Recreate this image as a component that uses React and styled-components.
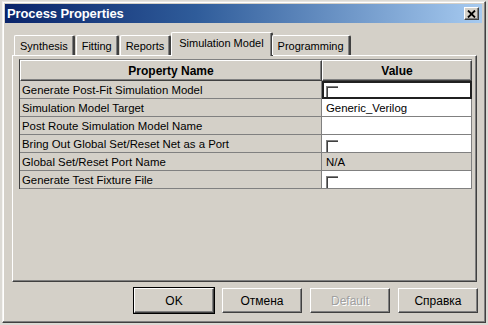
import React from 'react';
import styled, { createGlobalStyle } from 'styled-components';

const GlobalStyle = createGlobalStyle`
  html, body {
    margin: 0;
    padding: 0;
    background: #d4d0c8;
  }
  body {
    font-family: 'Liberation Sans', Arial, sans-serif;
  }
`;

const rows = [
  { name: 'Generate Post-Fit Simulation Model', kind: 'check', focused: true },
  { name: 'Simulation Model Target', kind: 'text', value: 'Generic_Verilog' },
  { name: 'Post Route Simulation Model Name', kind: 'text', value: '' },
  { name: 'Bring Out Global Set/Reset Net as a Port', kind: 'check' },
  { name: 'Global Set/Reset Port Name', kind: 'readonly', value: 'N/A' },
  { name: 'Generate Test Fixture File', kind: 'check' },
];

const tabs = ['Synthesis', 'Fitting', 'Reports', 'Simulation Model', 'Programming'];

const ProcessProperties = () => {
  return (
    <Screen>
      <GlobalStyle />
      <Window>
        <TitleBar>
          <Title>Process Properties</Title>
          <CloseButton>
            <svg width="9" height="8" viewBox="0 0 9 8">
              <path d="M1 0.5 L8 7.5 M8 0.5 L1 7.5" stroke="#000" strokeWidth="1.8" />
            </svg>
          </CloseButton>
        </TitleBar>

        <Body>
          <TabStrip>
            {tabs.map((t) => (
              <Tab key={t} $active={t === 'Simulation Model'}>{t}</Tab>
            ))}
          </TabStrip>

          <Panel>
            <Grid>
              <HeaderCell>Property Name</HeaderCell>
              <HeaderCell>Value</HeaderCell>
              {rows.map((r) => (
                <React.Fragment key={r.name}>
                  <NameCell>{r.name}</NameCell>
                  <ValueCell $readonly={r.kind === 'readonly'} $focused={r.focused}>
                    {r.kind === 'check' ? <CheckBox /> : r.value}
                  </ValueCell>
                </React.Fragment>
              ))}
            </Grid>
          </Panel>

          <ButtonRow>
            <Button $default>OK</Button>
            <Button>Отмена</Button>
            <Button disabled>Default</Button>
            <Button>Справка</Button>
          </ButtonRow>
        </Body>
      </Window>
    </Screen>
  );
};

const Screen = styled.div`
  width: 488px;
  height: 325px;
  padding: 1px 2px 2px 2px;
  box-sizing: border-box;
  background: #dcdad5;
`;

const Window = styled.div`
  height: 100%;
  box-sizing: border-box;
  background: #d4d0c8;
  border-top: 1px solid #e8e6e2;
  border-left: 1px solid #f4f3f0;
  border-right: 1px solid #404040;
  border-bottom: 1px solid #404040;
  box-shadow: inset -1px -1px 0 #808080, inset 1px 1px 0 #ffffff;
  padding: 2px 3px 3px 2px;
  display: flex;
  flex-direction: column;
`;

const TitleBar = styled.div`
  height: 19px;
  display: flex;
  align-items: center;
  justify-content: space-between;
  padding: 0 3px 0 2px;
  background: linear-gradient(to right, #0a246a 0%, #2f5c9a 40%, #a6caf0 100%);
`;

const Title = styled.span`
  color: #ffffff;
  font-weight: bold;
  font-size: 13px;
  letter-spacing: -0.1px;
`;

const CloseButton = styled.div`
  width: 15px;
  height: 13px;
  box-sizing: border-box;
  background: #d4d0c8;
  border-top: 1px solid #ffffff;
  border-left: 1px solid #ffffff;
  border-right: 1px solid #404040;
  border-bottom: 1px solid #404040;
  box-shadow: inset -1px -1px 0 #808080;
  display: flex;
  align-items: center;
  justify-content: center;
`;

const Body = styled.div`
  flex: 1;
  display: flex;
  flex-direction: column;
  padding: 9px 2px 0 7px;
`;

const TabStrip = styled.div`
  display: flex;
  align-items: flex-end;
  height: 23px;
  padding-left: 2px;
  position: relative;
  z-index: 1;
`;

const Tab = styled.div`
  font-size: 11px;
  color: #000;
  box-sizing: border-box;
  height: ${(p) => (p.$active ? '24px' : '20px')};
  margin: ${(p) => (p.$active ? '0 -1px -1px -1px' : '0 1px 0 0')};
  padding: ${(p) => (p.$active ? '4px 7px 0 7px' : '4px 5px 0 5px')};
  background: #d4d0c8;
  border-top: 1px solid #ffffff;
  border-left: 1px solid #ffffff;
  border-right: 2px solid #404040;
  box-shadow: inset -1px 0 0 #808080;
  border-radius: 2px 2px 0 0;
  white-space: nowrap;
`;

const Panel = styled.div`
  height: 227px;
  box-sizing: border-box;
  margin-right: 3px;
  background: #d4d0c8;
  border-top: 1px solid #ffffff;
  border-left: 1px solid #ffffff;
  border-right: 1px solid #404040;
  border-bottom: 1px solid #404040;
  box-shadow: inset -1px -1px 0 #808080;
  padding: 3px 0 0 6px;
`;

const Grid = styled.div`
  display: grid;
  grid-template-columns: 302px 150px;
  grid-auto-rows: 18px;
  grid-template-rows: 21px;
  width: 452px;
  border-left: 1px solid #404040;
  border-top: 1px solid #808080;
`;

const HeaderCell = styled.div`
  box-sizing: border-box;
  font-size: 12px;
  font-weight: bold;
  display: flex;
  align-items: center;
  justify-content: center;
  background: #d4d0c8;
  border-top: 1px solid #ffffff;
  border-left: 1px solid #ffffff;
  border-right: 1px solid #404040;
  border-bottom: 1px solid #404040;
  box-shadow: inset -1px -1px 0 #808080;
`;

const NameCell = styled.div`
  box-sizing: border-box;
  font-size: 11.4px;
  display: flex;
  align-items: center;
  padding-left: 2px;
  background: #d4d0c8;
  border-right: 1px solid #808080;
  border-bottom: 1px solid #808080;
  white-space: nowrap;
`;

const ValueCell = styled.div`
  box-sizing: border-box;
  font-size: 11.4px;
  display: flex;
  align-items: center;
  padding-left: 4px;
  background: ${(p) => (p.$readonly ? '#d4d0c8' : '#ffffff')};
  border-right: 1px solid #808080;
  border-bottom: 1px solid #808080;
  outline: ${(p) => (p.$focused ? '2px solid #202020' : 'none')};
  outline-offset: -2px;
`;

const CheckBox = styled.span`
  width: 12px;
  height: 12px;
  box-sizing: border-box;
  margin-top: 4px;
  background: #ffffff;
  border-top: 1px solid #808080;
  border-left: 1px solid #808080;
  box-shadow: inset 1px 1px 0 #404040;
`;

const ButtonRow = styled.div`
  display: flex;
  justify-content: flex-end;
  gap: 8px;
  padding-top: 6px;
  padding-right: 2px;
`;

const Button = styled.button`
  width: 80px;
  height: 25px;
  box-sizing: border-box;
  font-family: 'Liberation Sans', Arial, sans-serif;
  font-size: 12px;
  font-weight: normal;
  color: ${(p) => (p.disabled ? '#a0a0a0' : '#000')};
  text-shadow: ${(p) => (p.disabled ? '1px 1px 0 #ffffff' : 'none')};
  background: #d4d0c8;
  padding: 0;
  border-top: 1px solid #ffffff;
  border-left: 1px solid #ffffff;
  border-right: 1px solid #404040;
  border-bottom: 1px solid #404040;
  box-shadow: inset -1px -1px 0 #808080;
  outline: ${(p) => (p.$default ? '1px solid #000' : 'none')};
  outline-offset: 0;
`;

export default ProcessProperties;
